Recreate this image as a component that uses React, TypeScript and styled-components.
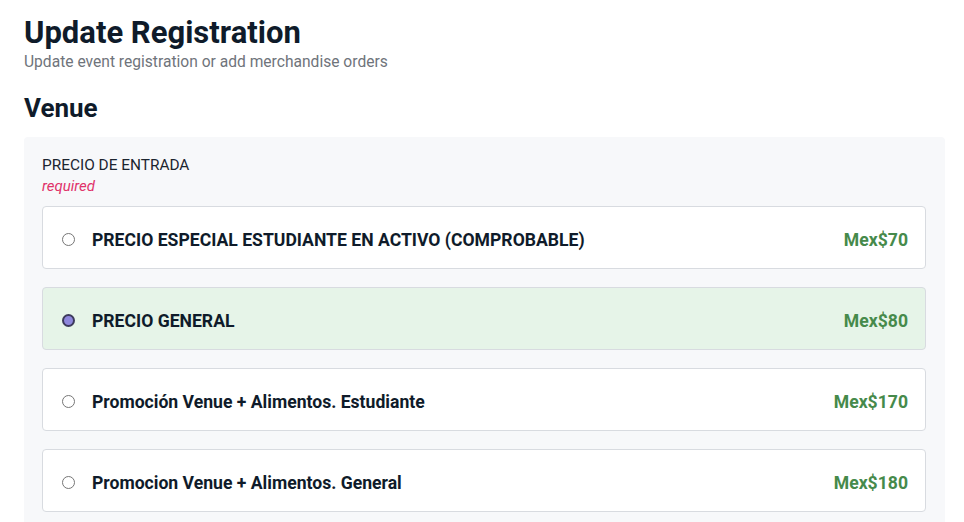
import * as React from 'react';
import styled, {createGlobalStyle} from 'styled-components';

const GlobalStyle = createGlobalStyle`
	body {
		margin: 0;
		background: #ffffff;
		font-family: Roboto, "Liberation Sans", sans-serif;
		color: #0f1b2a;
	}
`;

const Page = styled.div`
	padding: 14px 19px 0 24px;
`;

const Title = styled.h1`
	margin: 0;
	font-size: 31px;
	line-height: 38px;
	font-weight: 700;
	color: #0f1b2a;
`;

const Subtitle = styled.p`
	margin: 0;
	font-size: 15.6px;
	line-height: 21px;
	color: #6f747b;
`;

const SectionTitle = styled.h2`
	margin: 19px 0 0;
	font-size: 26px;
	line-height: 32px;
	font-weight: 700;
	color: #0f1b2a;
`;

const Panel = styled.div`
	margin-top: 13px;
	background: #f7f8fa;
	border-radius: 4px;
	padding: 18px 19px 18px 18px;
`;

const FieldLabel = styled.div`
	font-size: 15.4px;
	line-height: 20px;
	color: #1c2530;
`;

const Required = styled.div`
	font-size: 15px;
	line-height: 22px;
	font-style: italic;
	color: #e0336a;
	margin-bottom: 9px;
`;

const Options = styled.div`
	display: flex;
	flex-direction: column;
	gap: 18px;
`;

const Option = styled.label<{selected?: boolean}>`
	display: flex;
	align-items: center;
	height: 63px;
	box-sizing: border-box;
	padding: 4px 17px 0 19px;
	border: 1px solid #d8dbe0;
	border-radius: 4px;
	background: ${props => props.selected ? '#e6f4e8' : '#ffffff'};
	cursor: pointer;
`;

const Radio = styled.span<{checked?: boolean}>`
	flex: none;
	width: 13px;
	height: 13px;
	border-radius: 50%;
	box-sizing: border-box;
	border: ${props => props.checked ? '2px solid #3d3a5c' : '1px solid #767676'};
	background: ${props => props.checked ? '#8e86dc' : '#ffffff'};
	margin-right: 17px;
`;

const OptionName = styled.span`
	flex: 1;
	font-size: 17.6px;
	font-weight: 700;
	color: #0f1b2a;
`;

const Price = styled.span`
	font-size: 17.6px;
	font-weight: 700;
	color: #468a4b;
`;

const options = [
	{name: 'PRECIO ESPECIAL ESTUDIANTE EN ACTIVO (COMPROBABLE)', price: 'Mex$70'},
	{name: 'PRECIO GENERAL', price: 'Mex$80'},
	{name: 'Promoción Venue + Alimentos. Estudiante', price: 'Mex$170'},
	{name: 'Promocion Venue + Alimentos. General', price: 'Mex$180'},
];

export default function App() {
	const [selected, setSelected] = React.useState(1);

	return (
		<Page>
			<GlobalStyle />
			<Title>Update Registration</Title>
			<Subtitle>Update event registration or add merchandise orders</Subtitle>
			<SectionTitle>Venue</SectionTitle>
			<Panel>
				<FieldLabel>PRECIO DE ENTRADA</FieldLabel>
				<Required>required</Required>
				<Options>
					{options.map((option, i) => (
						<Option
							key={option.name}
							selected={i === selected}
							onClick={() => setSelected(i)}
						>
							<Radio checked={i === selected} />
							<OptionName>{option.name}</OptionName>
							<Price>{option.price}</Price>
						</Option>
					))}
				</Options>
			</Panel>
		</Page>
	);
}
